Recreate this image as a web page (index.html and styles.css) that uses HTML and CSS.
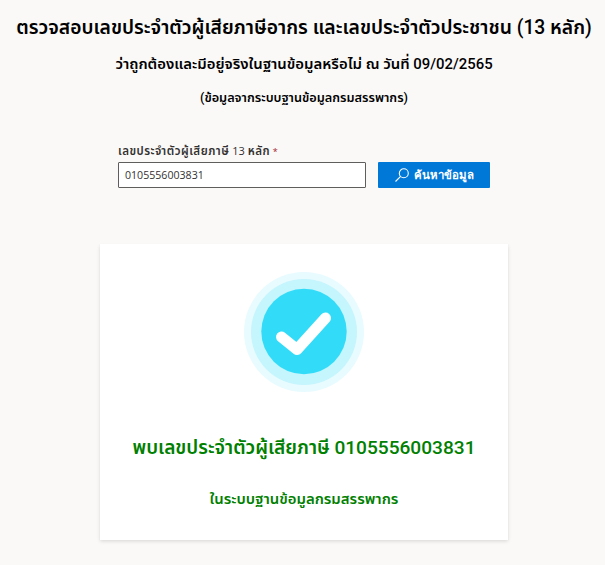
FILE: index.html
```
<!DOCTYPE html>
<html lang="th">

<head>
    <meta charset="UTF-8">
    <title>ตรวจสอบเลขประจำตัวผู้เสียภาษีอากร</title>
    <link rel="stylesheet" href="styles.css">
</head>

<body>
    <header class="heading">
        <h2 class="heading_title">ตรวจสอบเลขประจำตัวผู้เสียภาษีอากร และเลขประจำตัวประชาชน <span class="num">(13</span> หลัก<span class="num">)</span></h2>
        <h3 class="heading_date">ว่าถูกต้องและมีอยู่จริงในฐานข้อมูลหรือไม่ ณ วันที่ <span class="num">09/02/2565</span></h3>
        <h4 class="heading_source"><span class="num">(</span>ข้อมูลจากระบบฐานข้อมูลกรมสรรพากร<span class="num">)</span></h4>
    </header>
    <form class="search">
        <div class="field">
            <label class="field_label" for="nid"><span class="field_text">เลขประจำตัวผู้เสียภาษี</span> 13 <span class="field_text">หลัก</span> <span class="required">*</span></label>
            <input class="field_input" id="nid" type="text" value="0105556003831">
        </div>
        <button class="search_btn" type="button">
            <svg class="search_icon" viewBox="0 0 14 14">
                <circle cx="8.8" cy="5.2" r="4.5" />
                <path d="M5.6 8.4L.5 13.5" />
            </svg>
            <span class="search_text">ค้นหาข้อมูล</span>
        </button>
    </form>
    <section class="result">
        <svg class="result_icon" viewBox="0 0 120 120">
            <circle cx="60" cy="60" r="60" fill="#e8fbff" />
            <circle cx="60" cy="60" r="53" fill="#c5f5fd" />
            <circle cx="60" cy="59.5" r="42.7" fill="#32dcf8" />
            <path d="M37.5 65L53 77.5L81.5 46" />
        </svg>
        <h2 class="result_title">พบเลขประจำตัวผู้เสียภาษี <span class="num">0105556003831</span></h2>
        <h3 class="result_sub">ในระบบฐานข้อมูลกรมสรรพากร</h3>
    </section>
</body>

</html>
```
FILE: styles.css
```
* {
    margin: 0;
    padding: 0;
    box-sizing: border-box;
}
body {
    min-height: 565px;
    padding-bottom: 25px;
    background-color: #faf9f8;
    color: #000;
    font-family: Roboto, "Noto Sans Thai", "Noto Sans", sans-serif;
}

h2,
h3,
h4 {
    font-weight: 600;
    text-align: center;
    white-space: nowrap;
}

.num {
    font-weight: 500;
}

.heading {
    display: flex;
    flex-direction: column;
    align-items: center;
    padding: 12px 0 0 3px;
}

.heading_title {
    font-size: 19.3px;
    line-height: 32px;
}

.heading_date {
    margin-top: 8px;
    font-size: 14.9px;
    line-height: 24px;
}

.heading_source {
    margin-top: 12px;
    font-size: 12.7px;
    line-height: 20px;
}

.search {
    display: flex;
    align-items: flex-end;
    gap: 12px;
    margin: 34px 0 0 118px;
}

.field {
    width: 248px;
}

.field_label {
    display: block;
    height: 20px;
    font-family: "Open Sans", "Noto Sans Thai", sans-serif;
    font-size: 11px;
    font-weight: 400;
    line-height: 18px;
    color: #323130;
    white-space: nowrap;
}

.field_text {
    font-size: 11.5px;
    font-weight: 600;
    letter-spacing: .5px;
}

.required {
    font-size: 9px;
    color: #a4262c;
}

.field_input {
    display: block;
    width: 248px;
    height: 26px;
    padding: 0 6px;
    border: 1px solid #605e5c;
    border-radius: 1px;
    background: #fff;
    font-family: "Open Sans", sans-serif;
    font-size: 10.6px;
    color: #323130;
}

.search_btn {
    display: flex;
    align-items: center;
    justify-content: center;
    gap: 5px;
    width: 112px;
    height: 26px;
    border: 0;
    border-radius: 1px;
    background: #0078d7;
    color: #fff;
    font-family: "Noto Sans", sans-serif;
    font-size: 11.4px;
    font-weight: 700;
    white-space: nowrap;
}

.search_icon {
    width: 14px;
    height: 14px;
    fill: none;
    stroke: #fff;
    stroke-width: 1.1;
}

.result {
    display: flex;
    flex-direction: column;
    align-items: center;
    width: 408px;
    height: 296px;
    margin: 56px 0 0 100px;
    padding-top: 28px;
    background: #fff;
    box-shadow: 0 1.6px 3.6px rgba(0, 0, 0, .13), 0 .3px .9px rgba(0, 0, 0, .11);
    color: #008000;
}

.result_icon {
    width: 120px;
    height: 120px;
}

.result_icon path {
    fill: none;
    stroke: #fff;
    stroke-width: 11;
    stroke-linecap: round;
    stroke-linejoin: round;
}

.result_title {
    margin-top: 40px;
    font-size: 19.1px;
    line-height: 32px;
}

.result_sub {
    margin-top: 23px;
    font-size: 14.9px;
    line-height: 24px;
}
```
